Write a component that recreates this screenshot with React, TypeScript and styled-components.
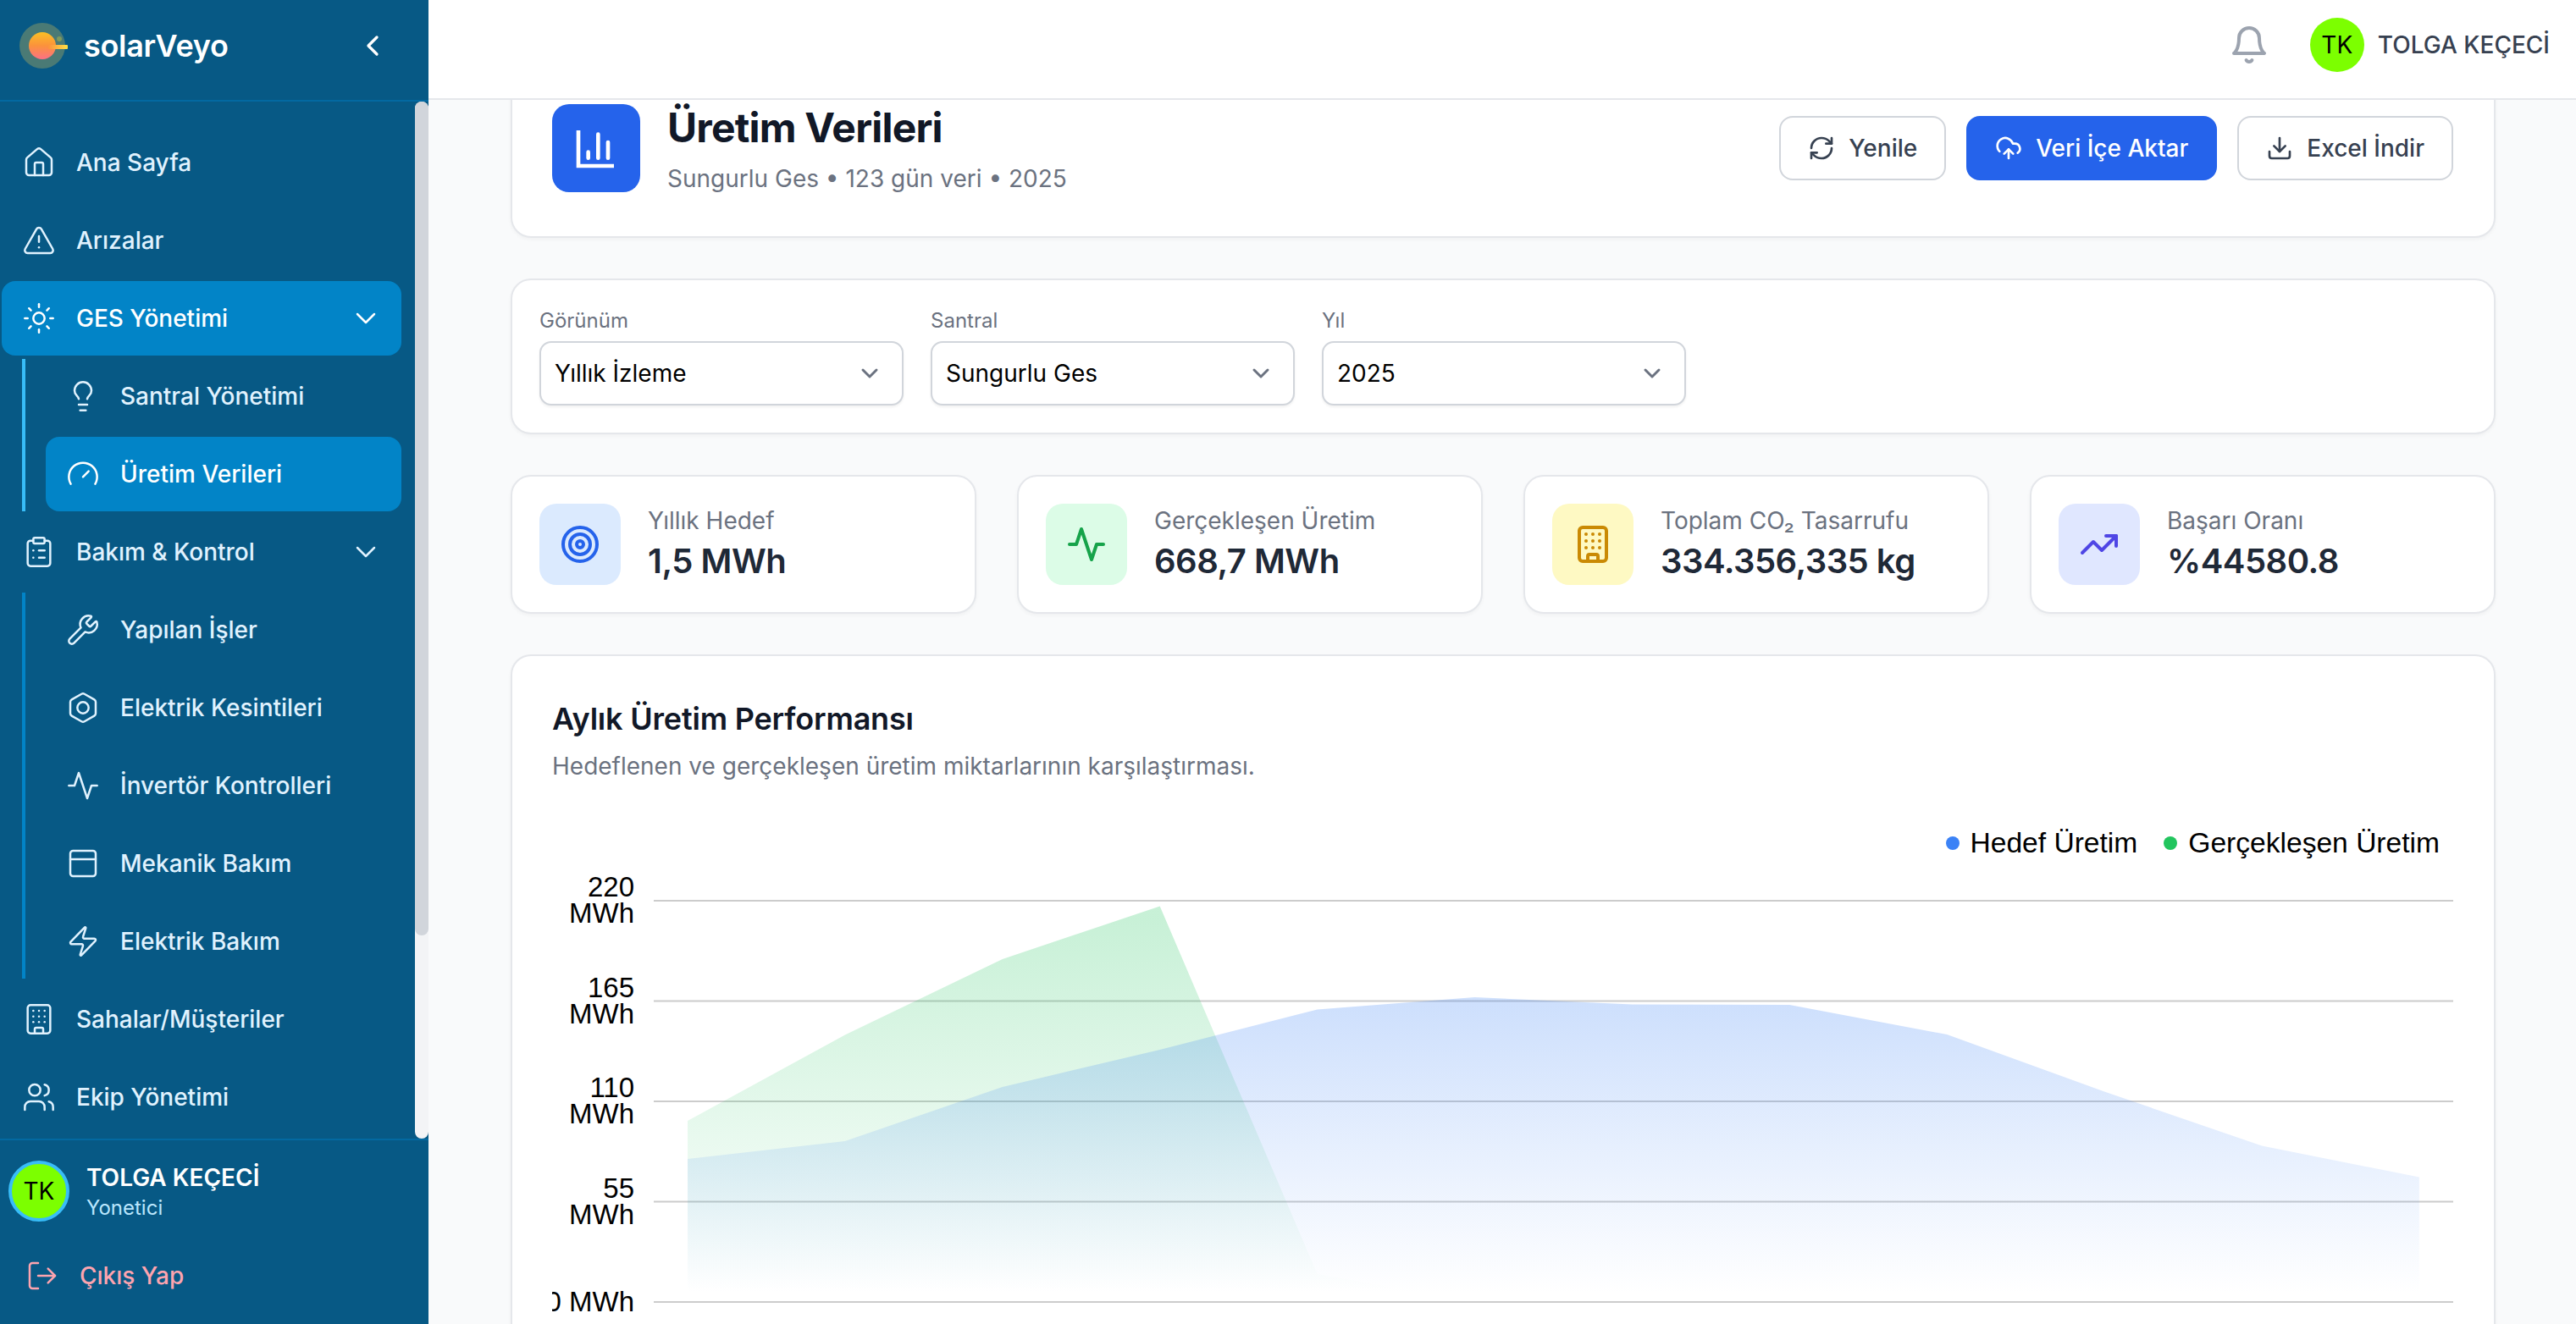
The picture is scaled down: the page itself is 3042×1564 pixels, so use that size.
import React from "react";
import styled, { createGlobalStyle } from "styled-components";
import {
  House, TriangleAlert, Sun, Lightbulb, Gauge, ClipboardList, Wrench, PanelTop, Zap, Building, Users,
  LogOut, ChevronDown, ChevronLeft, RefreshCw, CloudUpload, Download, Target, TrendingUp,
} from "lucide-react";

const Global = createGlobalStyle`
  html, body { margin: 0; padding: 0; height: 100%; overflow: hidden; background: #f9fafb; }
  * { box-sizing: border-box; }
  body { font-family: Inter, "Liberation Sans", sans-serif; }
`;

const Shell = styled.div`display: flex; width: 100vw; height: 100vh; overflow: hidden;`;

/* ---------- icons drawn by hand ---------- */
const Svg = ({ size, sw = 2, children }: { size: number; sw?: number; children: React.ReactNode }) => (
  <svg width={size} height={size} viewBox="0 0 24 24" fill="none" stroke="currentColor" strokeWidth={sw} strokeLinecap="round" strokeLinejoin="round" style={{ flex: "none" }}>
    {children}
  </svg>
);
const Pulse = ({ size, sw }: { size: number; sw?: number }) => (
  <Svg size={size} sw={sw}><polyline points="22 12 18 12 15 21 9 3 6 12 2 12" /></Svg>
);
const HexNut = ({ size, sw }: { size: number; sw?: number }) => (
  <Svg size={size} sw={sw}>
    <path d="M21 16V8a2 2 0 0 0-1-1.73l-7-4a2 2 0 0 0-2 0l-7 4A2 2 0 0 0 3 8v8a2 2 0 0 0 1 1.73l7 4a2 2 0 0 0 2 0l7-4A2 2 0 0 0 21 16z" />
    <circle cx="12" cy="12" r="4" />
  </Svg>
);
const Bars = ({ size, sw }: { size: number; sw?: number }) => (
  <Svg size={size} sw={sw}>
    <path d="M3 3v18h18" strokeLinecap="butt" strokeLinejoin="miter" />
    <path d="M18 17V9" /><path d="M13 17V5" /><path d="M8 17v-3" />
  </Svg>
);
const BellIcon = () => (
  <Svg size={48} sw={2}>
    <path d="M6 8a6 6 0 0 1 12 0c0 7 3 9 3 9H3s3-2 3-9" />
    <path d="M10.3 21a1.94 1.94 0 0 0 3.4 0" />
  </Svg>
);
const Logo = () => (
  <svg width="58" height="54" viewBox="0 0 58 54" style={{ flex: "none" }}>
    <defs>
      <linearGradient id="sun" x1="0" y1="0" x2="0" y2="1">
        <stop offset="0" stopColor="#fbbf24" />
        <stop offset="0.5" stopColor="#fb923c" />
        <stop offset="1" stopColor="#fb7185" />
      </linearGradient>
      <linearGradient id="beam" x1="0" y1="0" x2="1" y2="0">
        <stop offset="0" stopColor="#fb923c" />
        <stop offset="1" stopColor="#fde047" />
      </linearGradient>
    </defs>
    <circle cx="27" cy="27" r="27" fill="#4a7a75" />
    <circle cx="27" cy="27" r="16" fill="url(#sun)" />
    <circle cx="47" cy="19" r="3" fill="#7f9a5e" />
    <rect x="34" y="26" width="23" height="5" rx="1" fill="url(#beam)" />
  </svg>
);

/* ---------- sidebar ---------- */
const Sidebar = styled.aside`
  width: 506px; flex: none; height: 100%; display: flex; flex-direction: column; background: #075985;
`;
const Brand = styled.div`
  height: 120px; flex: none; display: flex; align-items: center; padding: 0 46px 10px 23px;
  border-bottom: 2px solid #0369a1; color: #fff;
`;
const BrandName = styled.div`
  margin-left: 18px; font-size: 36px; font-weight: 600; flex: 1; line-height: 56px; letter-spacing: -0.3px;
`;
const Middle = styled.div`flex: 1; min-height: 0; display: flex;`;
const Nav = styled.nav`
  flex: 1; min-width: 0; overflow: hidden; padding: 28px 16px 0 2px; display: flex; flex-direction: column; gap: 4px;
`;
const Rail = styled.div`
  width: 16px; flex: none; background: #f3f4f6; border-radius: 8px; display: flex;
`;
const Thumb = styled.div`width: 16px; height: 985px; background: #d1d5db; border-radius: 8px;`;
const Item = styled.div<{ $active?: boolean }>`
  height: 88px; flex: none; display: flex; align-items: center; gap: 24px; padding: 0 22px 0 24px;
  border-radius: 16px; font-size: 28px; font-weight: 500; line-height: 40px;
  color: ${(p) => (p.$active ? "#ffffff" : "#e0f2fe")};
  background: ${(p) => (p.$active ? "#0284c7" : "transparent")};
`;
const ItemLabel = styled.span`flex: 1; white-space: nowrap;`;
const SubList = styled.div<{ $open?: boolean }>`
  margin-left: 24px; padding-left: 24px; display: flex; flex-direction: column; gap: 4px;
  border-left: 4px solid ${(p) => (p.$open ? "#38bdf8" : "#0284c7")};
`;
const Footer = styled.div`
  height: 219px; flex: none; border-top: 2px solid #0369a1; padding: 24px 10px 0; display: flex; flex-direction: column;
`;
const UserRow = styled.div`display: flex; align-items: center; gap: 20px;`;
const SideAvatar = styled.div`
  width: 72px; height: 72px; border-radius: 50%; border: 4px solid #38bdf8; background: #7cff00; color: #000;
  display: flex; align-items: center; justify-content: center; font-size: 28px; flex: none;
`;
const UserText = styled.div`display: flex; flex-direction: column;`;
const UserName = styled.div`color: #fff; font-size: 28px; font-weight: 600; line-height: 40px;`;
const UserRole = styled.div`color: #bae6fd; font-size: 24px; line-height: 32px;`;
const Logout = styled.div`
  margin-top: 24px; padding-left: 20px; height: 80px; display: flex; align-items: center; gap: 24px;
  color: #fda4af; font-size: 28px; font-weight: 500;
`;

/* ---------- main ---------- */
const Main = styled.main`flex: 1; min-width: 0; height: 100%; display: flex; flex-direction: column;`;
const Topbar = styled.header`
  height: 118px; flex: none; background: #fff; border-bottom: 2px solid #e5e7eb; display: flex; align-items: center;
  justify-content: flex-end; padding: 0 31px 10px 0; position: relative; z-index: 2; color: #9ca3af;
`;
const TopAvatar = styled.div`
  width: 64px; height: 64px; border-radius: 50%; background: #7cff00; color: #000; margin-left: 48px;
  display: flex; align-items: center; justify-content: center; font-size: 28px;
`;
const TopName = styled.div`margin-left: 16px; color: #374151; font-size: 28px; font-weight: 500;`;
const Scroll = styled.div`flex: 1; min-height: 0; overflow: hidden; background: #f9fafb;`;
const Content = styled.div`
  margin-top: -49px; padding: 0 95px 0 97px; display: flex; flex-direction: column; gap: 48px;
`;
const Card = styled.section`
  background: #fff; border: 2px solid #e5e7eb; border-radius: 24px; box-shadow: 0 2px 4px rgba(0,0,0,.04);
`;
const HeaderCard = styled(Card)`padding: 48px 48px 48px 47px; display: flex; align-items: center;`;
const HeaderIcon = styled.div`
  width: 104px; height: 104px; border-radius: 20px; background: #2563eb; color: #fff; flex: none;
  display: flex; align-items: center; justify-content: center;
`;
const HeaderText = styled.div`margin-left: 32px; flex: 1;`;
const Title = styled.h1`margin: 0; font-size: 48px; line-height: 64px; font-weight: 700; color: #111827; letter-spacing: -0.8px;`;
const Sub = styled.p`margin: 8px 0 0; font-size: 28px; line-height: 40px; color: #6b7280;`;
const Actions = styled.div`display: flex; gap: 24px;`;
const Btn = styled.button<{ $primary?: boolean }>`
  height: 76px; display: flex; align-items: center; gap: 16px; padding: 0 32px; border-radius: 16px;
  font: 500 28px Inter, sans-serif;
  background: ${(p) => (p.$primary ? "#2563eb" : "#fff")};
  color: ${(p) => (p.$primary ? "#fff" : "#374151")};
  border: 2px solid ${(p) => (p.$primary ? "#2563eb" : "#d1d5db")};
`;
const FilterCard = styled(Card)`padding: 32px; display: flex; gap: 32px;`;
const Field = styled.div`width: 430px; display: flex; flex-direction: column; gap: 8px;`;
const FieldLabel = styled.label`font-size: 24px; line-height: 32px; color: #6b7280;`;
const Select = styled.div`
  height: 76px; border: 2px solid #d1d5db; border-radius: 14px; box-shadow: 0 2px 3px rgba(0,0,0,.06);
  display: flex; align-items: center; justify-content: space-between; padding: 0 18px 0 16px;
  font-size: 28px; color: #000; background: #fff;
`;
const Stats = styled.div`display: grid; grid-template-columns: repeat(4, 1fr); gap: 48px;`;
const StatCard = styled(Card)`padding: 32px; display: flex; align-items: center; gap: 32px;`;
const StatIcon = styled.div<{ $bg: string; $fg: string }>`
  width: 96px; height: 96px; border-radius: 20px; flex: none; display: flex; align-items: center; justify-content: center;
  background: ${(p) => p.$bg}; color: ${(p) => p.$fg};
`;
const StatLabel = styled.div`font-size: 28px; line-height: 40px; color: #6b7280;`;
const StatValue = styled.div`font-size: 40px; line-height: 56px; font-weight: 600; color: #1f2937; letter-spacing: -0.5px;`;
const ChartCard = styled(Card)`padding: 46px 48px 0 47px; border-bottom: 0; height: 900px;`;
const ChartTitle = styled.h2`margin: 0; font-size: 36px; line-height: 56px; font-weight: 600; color: #111827; letter-spacing: -0.2px;`;
const ChartSub = styled.p`margin: 8px 0 0; font-size: 28px; line-height: 40px; color: #6b7280;`;
const Legend = styled.div`
  margin-top: 51px; height: 40px; display: flex; justify-content: flex-end; align-items: center; gap: 31px; padding-right: 16px;
  font: 33.6px "Liberation Sans", Arial, sans-serif; color: #000;
`;
const LegendItem = styled.div`display: flex; align-items: center; gap: 13px;`;
const Dot = styled.span<{ $c: string }>`width: 16px; height: 16px; border-radius: 50%; background: ${(p) => p.$c};`;
const ChartSvg = styled.svg`display: block; margin: 7px 0 0 0; overflow: hidden;`;

/* ---------- data ---------- */
const nav = { size: 40, strokeWidth: 1.5 };
const OX = 652, OY = 1024, BASE = 1539;
const xs = Array.from({ length: 12 }, (_, i) => 812 + i * 185.9);
const blueY = [1370, 1349, 1285, 1241, 1193.5, 1179, 1187.5, 1188, 1223, 1290.5, 1354.5, 1391.5];
const greenY = [1325, 1223.5, 1134, 1071.5, 1506, BASE, BASE, BASE, BASE, BASE, BASE, BASE];
const area = (ys: number[]) =>
  `M${xs[0] - OX} ${BASE - OY} ` + ys.map((y, i) => `L${(xs[i] - OX).toFixed(1)} ${y - OY}`).join(" ") + ` L${xs[11] - OX} ${BASE - OY}Z`;
const ticks: [number, string][] = [[1065, "220"], [1183.5, "165"], [1302, "110"], [1420.5, "55"]];

const Chart = () => (
  <ChartSvg width="2290" height="540" viewBox="0 0 2290 540">
    <defs>
      <linearGradient id="gBlue" x1="0" y1="0" x2="0" y2="1">
        <stop offset="0.03" stopColor="#3b82f6" stopOpacity="0.25" />
        <stop offset="0.97" stopColor="#3b82f6" stopOpacity="0" />
      </linearGradient>
      <linearGradient id="gGreen" x1="0" y1="0" x2="0" y2="1">
        <stop offset="0.03" stopColor="#22c55e" stopOpacity="0.25" />
        <stop offset="0.97" stopColor="#22c55e" stopOpacity="0" />
      </linearGradient>
    </defs>
    {[...ticks.map((t) => t[0]), BASE].map((y) => (
      <rect key={y} x={772 - OX} y={y - OY - 1} width={2125} height={2} fill="#cccccc" />
    ))}
    <g fontFamily="'Liberation Sans', Arial, sans-serif" fontSize="33" fill="#000" textAnchor="end">
      {ticks.map(([y, v]) => (
        <text key={v} x={749 - OX} y={y - OY}>
          <tspan x={749 - OX} dy="-5">{v}</tspan>
          <tspan x={749 - OX} dy="31">MWh</tspan>
        </text>
      ))}
      <text x={749 - OX} y={BASE - OY + 11}>0 MWh</text>
    </g>
    <path d={area(greenY)} fill="url(#gGreen)" />
    <path d={area(blueY)} fill="url(#gBlue)" />
  </ChartSvg>
);

export default function App() {
  return (
    <Shell>
      <Global />
      <Sidebar>
        <Brand>
          <Logo />
          <BrandName>solarVeyo</BrandName>
          <ChevronLeft size={40} strokeWidth={2} />
        </Brand>
        <Middle>
          <Nav>
            <Item><House {...nav} /><ItemLabel>Ana Sayfa</ItemLabel></Item>
            <Item><TriangleAlert {...nav} /><ItemLabel>Arızalar</ItemLabel></Item>
            <Item $active><Sun {...nav} /><ItemLabel>GES Yönetimi</ItemLabel><ChevronDown {...nav} /></Item>
            <SubList $open>
              <Item><Lightbulb {...nav} /><ItemLabel>Santral Yönetimi</ItemLabel></Item>
              <Item $active><Gauge {...nav} /><ItemLabel>Üretim Verileri</ItemLabel></Item>
            </SubList>
            <Item><ClipboardList {...nav} /><ItemLabel>Bakım &amp; Kontrol</ItemLabel><ChevronDown {...nav} /></Item>
            <SubList>
              <Item><Wrench {...nav} /><ItemLabel>Yapılan İşler</ItemLabel></Item>
              <Item><HexNut size={40} sw={1.5} /><ItemLabel>Elektrik Kesintileri</ItemLabel></Item>
              <Item><Pulse size={40} sw={1.5} /><ItemLabel>İnvertör Kontrolleri</ItemLabel></Item>
              <Item><PanelTop {...nav} /><ItemLabel>Mekanik Bakım</ItemLabel></Item>
              <Item><Zap {...nav} /><ItemLabel>Elektrik Bakım</ItemLabel></Item>
            </SubList>
            <Item><Building {...nav} /><ItemLabel>Sahalar/Müşteriler</ItemLabel></Item>
            <Item><Users {...nav} /><ItemLabel>Ekip Yönetimi</ItemLabel></Item>
          </Nav>
          <Rail><Thumb /></Rail>
        </Middle>
        <Footer>
          <UserRow>
            <SideAvatar>TK</SideAvatar>
            <UserText>
              <UserName>TOLGA KEÇECİ</UserName>
              <UserRole>Yonetici</UserRole>
            </UserText>
          </UserRow>
          <Logout><LogOut {...nav} /><span>Çıkış Yap</span></Logout>
        </Footer>
      </Sidebar>
      <Main>
        <Topbar>
          <BellIcon />
          <TopAvatar>TK</TopAvatar>
          <TopName>TOLGA KEÇECİ</TopName>
        </Topbar>
        <Scroll>
          <Content>
            <HeaderCard>
              <HeaderIcon><Bars size={56} sw={2} /></HeaderIcon>
              <HeaderText>
                <Title>Üretim Verileri</Title>
                <Sub>Sungurlu Ges • 123 gün veri • 2025</Sub>
              </HeaderText>
              <Actions>
                <Btn><RefreshCw size={32} strokeWidth={2} />Yenile</Btn>
                <Btn $primary><CloudUpload size={32} strokeWidth={2} />Veri İçe Aktar</Btn>
                <Btn><Download size={32} strokeWidth={2} />Excel İndir</Btn>
              </Actions>
            </HeaderCard>
            <FilterCard>
              {[["Görünüm", "Yıllık İzleme"], ["Santral", "Sungurlu Ges"], ["Yıl", "2025"]].map(([l, v]) => (
                <Field key={l}>
                  <FieldLabel>{l}</FieldLabel>
                  <Select>
                    {v}
                    <svg width="40" height="40" viewBox="0 0 20 20" fill="none" stroke="#6b7280" strokeWidth="1.5" strokeLinecap="round" strokeLinejoin="round">
                      <path d="M6 8l4 4 4-4" />
                    </svg>
                  </Select>
                </Field>
              ))}
            </FilterCard>
            <Stats>
              <StatCard>
                <StatIcon $bg="#dbeafe" $fg="#2563eb"><Target size={48} strokeWidth={2} /></StatIcon>
                <div><StatLabel>Yıllık Hedef</StatLabel><StatValue>1,5 MWh</StatValue></div>
              </StatCard>
              <StatCard>
                <StatIcon $bg="#dcfce7" $fg="#16a34a"><Pulse size={48} sw={2} /></StatIcon>
                <div><StatLabel>Gerçekleşen Üretim</StatLabel><StatValue>668,7 MWh</StatValue></div>
              </StatCard>
              <StatCard>
                <StatIcon $bg="#fef9c3" $fg="#ca8a04"><Building size={48} strokeWidth={2} /></StatIcon>
                <div><StatLabel>Toplam CO₂ Tasarrufu</StatLabel><StatValue>334.356,335 kg</StatValue></div>
              </StatCard>
              <StatCard>
                <StatIcon $bg="#e0e7ff" $fg="#4f46e5"><TrendingUp size={48} strokeWidth={2} /></StatIcon>
                <div><StatLabel>Başarı Oranı</StatLabel><StatValue>%44580.8</StatValue></div>
              </StatCard>
            </Stats>
            <ChartCard>
              <ChartTitle>Aylık Üretim Performansı</ChartTitle>
              <ChartSub>Hedeflenen ve gerçekleşen üretim miktarlarının karşılaştırması.</ChartSub>
              <Legend>
                <LegendItem><Dot $c="#3b82f6" />Hedef Üretim</LegendItem>
                <LegendItem><Dot $c="#22c55e" />Gerçekleşen Üretim</LegendItem>
              </Legend>
              <Chart />
            </ChartCard>
          </Content>
        </Scroll>
      </Main>
    </Shell>
  );
}
